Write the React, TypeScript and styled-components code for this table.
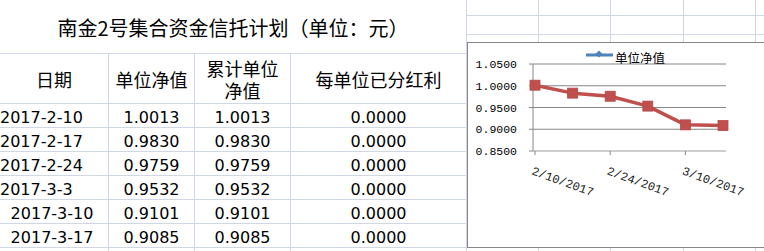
import styled, { createGlobalStyle } from 'styled-components'

const GlobalStyle = createGlobalStyle`
  html, body {
    margin: 0;
    padding: 0;
    background: #fff;
    overflow: hidden;
  }
`

const GRID = '#d0d7e5'
const COLS = [109, 86, 96, 176, 72, 72, 73, 72, 72]
const ROWS = [16, 19, 19, 50, 24, 24, 24, 24, 24, 24, 24]

type Align = 'left' | 'center'

interface IRow {
  date: string
  nav: string
  total: string
  bonus: string
  align: Align
}

const rows: IRow[] = [
  { date: '2017-2-10', nav: '1.0013', total: '1.0013', bonus: '0.0000', align: 'left' },
  { date: '2017-2-17', nav: '0.9830', total: '0.9830', bonus: '0.0000', align: 'left' },
  { date: '2017-2-24', nav: '0.9759', total: '0.9759', bonus: '0.0000', align: 'left' },
  { date: '2017-3-3', nav: '0.9532', total: '0.9532', bonus: '0.0000', align: 'left' },
  { date: '2017-3-10', nav: '0.9101', total: '0.9101', bonus: '0.0000', align: 'center' },
  { date: '2017-3-17', nav: '0.9085', total: '0.9085', bonus: '0.0000', align: 'center' },
]

const Sheet = styled.div`
  position: relative;
  width: 764px;
  height: 251px;
  overflow: hidden;
`

const Grid = styled.div`
  display: grid;
  grid-template-columns: ${COLS.map(c => `${c}px`).join(' ')};
  grid-template-rows: ${ROWS.map(r => `${r}px`).join(' ')};
  width: max-content;
`

const Cell = styled.div`
  box-sizing: border-box;
  border-right: 1px solid ${GRID};
  border-bottom: 1px solid ${GRID};
`

const TitleCell = styled(Cell)`
  grid-column: 1 / 5;
  grid-row: 1 / 4;
  display: flex;
  align-items: center;
  justify-content: center;
  padding-top: 2px;
  font-family: 'Noto Sans CJK SC', sans-serif;
  font-size: 20px;
  color: #000;
  white-space: nowrap;
`

const HeadCell = styled(Cell)`
  display: flex;
  align-items: center;
  justify-content: center;
  text-align: center;
  font-family: 'Noto Sans CJK SC', sans-serif;
  font-size: 18px;
  line-height: 22px;
  color: #000;
`

const DataCell = styled(Cell)<{ $align?: Align }>`
  display: flex;
  align-items: flex-end;
  justify-content: ${({ $align }) => ($align === 'left' ? 'flex-start' : 'center')};
  padding-right: ${({ $align }) => ($align === 'center' ? '4px' : '0')};
  font-family: 'DejaVu Sans', Verdana, sans-serif;
  font-size: 16px;
  color: #000;
  white-space: nowrap;
`

const ChartBox = styled.div`
  position: absolute;
  left: 467px;
  top: 42px;
  width: 330px;
  height: 206px;
  box-sizing: border-box;
  border: 1px solid #868686;
  background: #fff;
`

const AXIS_FONT = "'Liberation Mono', 'DejaVu Sans Mono', monospace"

const plotLeft = 65
const plotRight = 258
const yTop = 21
const step = 21.75
const values = [1.0013, 0.983, 0.9759, 0.9532, 0.9101, 0.9085]
const ticks = ['1.0500', '1.0000', '0.9500', '0.9000', '0.8500']
const dates = ['2/10/2017', '2/24/2017', '3/10/2017']

const px = (i: number) => 67 + i * 37.6
const py = (v: number) => yTop + ((1.05 - v) / 0.05) * step

const NavChart = () => {
  const pts = values.map((v, i) => `${px(i)},${py(v)}`).join(' ')
  return (
    <svg width='330' height='206'>
      {ticks.map((t, i) => {
        const y = yTop + i * step
        return (
          <g key={t}>
            {i < 4 && (
              <line x1={plotLeft} x2={plotRight} y1={y} y2={y} stroke='#868686' strokeWidth='1' />
            )}
            <line x1={plotLeft - 4} x2={plotLeft} y1={y} y2={y} stroke='#868686' strokeWidth='1' />
            <text
              x='49'
              y={y + 4}
              textAnchor='end'
              fontFamily={AXIS_FONT}
              fontSize='11.5'
              fill='#000'>
              {t}
            </text>
          </g>
        )
      })}
      <line x1={plotLeft} x2={plotLeft} y1={yTop} y2={yTop + 4 * step} stroke='#868686' strokeWidth='1' />
      <line
        x1={plotLeft}
        x2={plotRight}
        y1={yTop + 4 * step}
        y2={yTop + 4 * step}
        stroke='#bdbdbd'
        strokeWidth='1.5'
      />
      {[0, 2, 4].map(i => (
        <line
          key={i}
          x1={px(i)}
          x2={px(i)}
          y1={yTop + 4 * step}
          y2={yTop + 4 * step + 4}
          stroke='#868686'
          strokeWidth='1'
        />
      ))}
      {dates.map((d, k) => {
        const x = px(k * 2) - 4
        const y = 131
        return (
          <text
            key={d}
            x={x}
            y={y}
            transform={`rotate(20 ${x} ${y})`}
            fontFamily={AXIS_FONT}
            fontSize='12'
            fill='#1a1a1a'>
            {d}
          </text>
        )
      })}
      <polyline points={pts} fill='none' stroke='#c0504d' strokeWidth='3.5' strokeLinejoin='round' />
      {values.map((v, i) => (
        <rect
          key={i}
          x={px(i) - 5}
          y={py(v) - 5}
          width='10'
          height='10'
          fill='#c0504d'
          stroke='#b54946'
          strokeWidth='0.8'
        />
      ))}
      <line x1='118' x2='145' y1='12' y2='12' stroke='#4f81bd' strokeWidth='3' />
      <rect x='128.5' y='8.5' width='5' height='5' fill='#4f81bd' transform='rotate(45 131 11)' />
      <text x='147' y='19.5' fontFamily="'Noto Sans CJK SC', sans-serif" fontSize='12.5' fill='#000'>
        单位净值
      </text>
    </svg>
  )
}

export default function App() {
  const empty = (n: number, prefix: string) =>
    Array.from({ length: n }, (_, i) => <Cell key={`${prefix}-${i}`} />)

  return (
    <Sheet>
      <GlobalStyle />
      <Grid>
        <TitleCell>南金2号集合资金信托计划（单位：元）</TitleCell>
        {/* columns E..I of the three title rows */}
        {[0, 1, 2].map(r => (
          <div key={r} style={{ display: 'contents' }}>
            {Array.from({ length: 5 }, (_, c) => (
              <Cell key={c} style={{ gridRow: r + 1, gridColumn: c + 5 }} />
            ))}
          </div>
        ))}

        <HeadCell>日期</HeadCell>
        <HeadCell>单位净值</HeadCell>
        <HeadCell>
          累计单位
          <br />
          净值
        </HeadCell>
        <HeadCell>每单位已分红利</HeadCell>
        {empty(5, 'h')}

        {rows.map(r => (
          <div key={r.date} style={{ display: 'contents' }}>
            <DataCell $align={r.align}>{r.date}</DataCell>
            <DataCell>{r.nav}</DataCell>
            <DataCell>{r.total}</DataCell>
            <DataCell>{r.bonus}</DataCell>
            {empty(5, r.date)}
          </div>
        ))}

        {empty(9, 'last')}
      </Grid>
      <ChartBox>
        <NavChart />
      </ChartBox>
    </Sheet>
  )
}
